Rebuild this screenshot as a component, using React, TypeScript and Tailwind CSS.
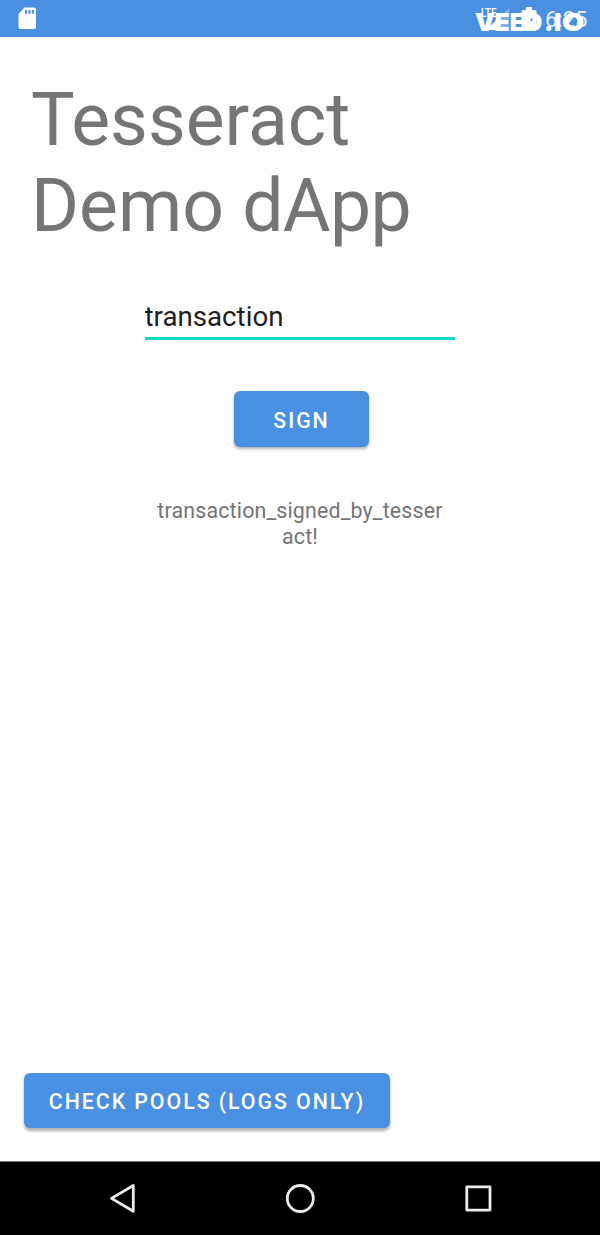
const SdCard = () => (
  <svg className="block h-6 w-5" viewBox="0 0 20 24">
    <path fill="#fff" d="M7.500 1.500H17Q19 1.500 19 3.500V21Q19 23 17 23H3.500Q1.500 23 1.500 21V8Z" />
    <path fill="#4990e2" d="M8 4h2.100v3.800H8zM11.400 4h2.100v3.800h-2.100zM14.800 4h2.100v3.800h-2.100z" />
  </svg>
);

function StatusBar() {
  return (
    <header className="flex h-[37px] shrink-0 items-start justify-between bg-[#4990e2] pl-[17px] pt-[6px] text-white">
      <SdCard />
      <div className="relative h-[31px] w-[128px]">
        <div className="flex items-start">
          <div className="relative h-7 w-9 pl-[9px]">
            <span className="block origin-left scale-x-75 text-[13px] font-medium leading-[14px]">LTE</span>
            <svg className="absolute left-[14px] top-[2px] h-[22px] w-[23px]" viewBox="0 0 23 22">
              <path fill="#fff" fillOpacity=".3" d="M23 0V22H0Z" />
              <path fill="#fff" d="M12 10.500V22H0Z" />
            </svg>
          </div>
          <svg className="ml-[13px] mt-[1px] h-[24px] w-[16px]" viewBox="0 0 16 24">
            <path fill="#fff" d="M5 0h6v3h3q1.500 0 1.500 1.500V22q0 1.500-1.500 1.500H2Q.5 23.500.5 22V4.500Q.5 3 2 3h3z" />
            <path fill="#4990e2" d="M9 5.500L4 14h3v6l5-8.500H9z" />
          </svg>
          <span className="ml-[8px] mt-[2px] text-[22px] leading-[24px] opacity-85">6:25</span>
        </div>
        <span className="absolute left-[3px] top-[4px] whitespace-nowrap font-[Inter] text-[25px] font-black leading-[24px] tracking-[-0.4px]">
          VEED<span className="ml-[2px] tracking-[0.7px]">.I</span><span className="inline-block origin-left scale-x-[1.15]">O</span>
        </span>
      </div>
    </header>
  );
}

function NavBar() {
  return (
    <nav className="flex h-[74px] shrink-0 items-center justify-between border-t border-[#777] bg-black px-[107px]">
      <svg className="h-[30px] w-[30px]" viewBox="0 0 30 30" fill="none" stroke="#ececec" strokeWidth="2.800" strokeLinejoin="round">
        <path d="M26.300 1.500V27.300L4.500 14.400Z" />
      </svg>
      <svg className="h-[30px] w-[30px]" viewBox="0 0 30 30" fill="none" stroke="#ececec" strokeWidth="2.800">
        <circle cx="15.300" cy="14.500" r="13" />
      </svg>
      <svg className="h-[30px] w-[30px]" viewBox="0 0 30 30" fill="none" stroke="#ececec" strokeWidth="2.800" strokeLinejoin="round">
        <rect x="3.800" y="2.900" width="23.200" height="23.200" />
      </svg>
    </nav>
  );
}

export default function App() {
  return (
    <div className="flex h-[1235px] w-[600px] flex-col overflow-hidden bg-[#fefdfe] font-[Roboto,sans-serif]">
      <StatusBar />
      <main className="flex flex-1 flex-col items-center">
        <h1 className="mt-[40px] w-full pl-[31px] text-[73.300px] font-normal leading-[86px] text-[#757476]">
          Tesseract
          <br />
          Demo <span className="tracking-[-0.700px]">dApp</span>
        </h1>
        <input
          className="mr-px mt-[47px] h-[44px] w-[310px] border-b-[3px] border-[#0fdbc9] bg-transparent text-[27.700px] leading-[32px] text-[#1f1e20] outline-none"
          defaultValue="transaction"
        />
        <button className="ml-[2px] mt-[51px] h-[56px] w-[135px] rounded-[6px] bg-[#4990e2] pl-px pt-[4px] text-[21.400px] font-medium tracking-[1.910px] text-white shadow-[0_2px_3px_rgba(0,0,0,0.3)]">
          SIGN
        </button>
        <p className="mt-[51px] w-[290px] text-center text-[21.400px] leading-[25.500px] tracking-[0.160px] text-[#757476]">
          transaction_signed_by_tesser
          <br />
          act!
        </p>
        <button className="mb-[33px] ml-[24px] mt-auto h-[55px] w-[366px] self-start rounded-[6px] bg-[#4990e2] pt-[3px] text-[21.400px] font-medium tracking-[1.910px] text-white shadow-[0_3px_3px_rgba(0,0,0,0.3)]">
          CHECK POOLS (LOGS ONLY)
        </button>
      </main>
      <NavBar />
    </div>
  );
}
